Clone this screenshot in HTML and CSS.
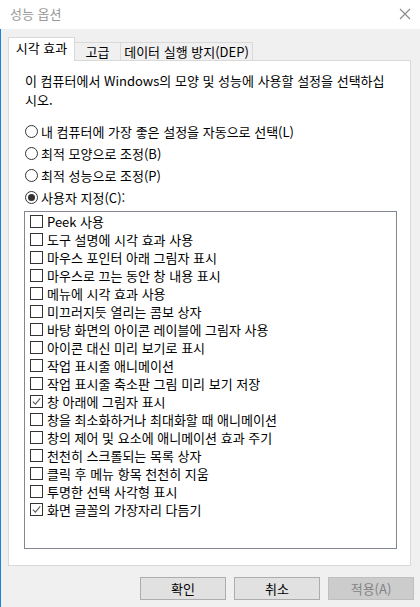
FILE: index.html
```html
<html lang="ko">
<head>
    <meta charset="UTF-8">
    <meta name="viewport" content="width=device-width, initial-scale=1.0">
    <title>성능 옵션</title>

    <link rel="stylesheet" href="styles.css">

</head>
<body>

    <header class="titlebar">
        <span class="title">성능 옵션</span>
        <svg class="close" width="12" height="12" viewBox="0 0 12 12">
            <path d="M1 1 L11 11 M11 1 L1 11" stroke="#8a8a8a" stroke-width="1.1" fill="none"/>
        </svg>
    </header>

    <main class="window">
        <div class="tabs">
            <div class="tab selected">시각 효과</div>
            <div class="tab">고급</div>
            <div class="tab">데이터 실행 방지(DEP)</div>
        </div>

        <div class="panel">
            <p class="intro">이 컴퓨터에서 Windows의 모양 및 성능에 사용할 설정을 선택하십<br>시오.</p>

            <div class="radios">
                <label class="radio"><span class="dot"></span>내 컴퓨터에 가장 좋은 설정을 자동으로 선택(L)</label>
                <label class="radio"><span class="dot"></span>최적 모양으로 조정(B)</label>
                <label class="radio"><span class="dot"></span>최적 성능으로 조정(P)</label>
                <label class="radio on"><span class="dot"></span>사용자 지정(C):</label>
            </div>

            <div class="list" id="list"></div>
        </div>

        <div class="buttons">
            <button class="btn">확인</button>
            <button class="btn">취소</button>
            <button class="btn disabled">적용(A)</button>
        </div>
    </main>

    <script>
        let items = [
            ["Peek 사용", false],
            ["도구 설명에 시각 효과 사용", false],
            ["마우스 포인터 아래 그림자 표시", false],
            ["마우스로 끄는 동안 창 내용 표시", false],
            ["메뉴에 시각 효과 사용", false],
            ["미끄러지듯 열리는 콤보 상자", false],
            ["바탕 화면의 아이콘 레이블에 그림자 사용", false],
            ["아이콘 대신 미리 보기로 표시", false],
            ["작업 표시줄 애니메이션", false],
            ["작업 표시줄 축소판 그림 미리 보기 저장", false],
            ["창 아래에 그림자 표시", true],
            ["창을 최소화하거나 최대화할 때 애니메이션", false],
            ["창의 제어 및 요소에 애니메이션 효과 주기", false],
            ["천천히 스크롤되는 목록 상자", false],
            ["클릭 후 메뉴 항목 천천히 지움", false],
            ["투명한 선택 사각형 표시", false],
            ["화면 글꼴의 가장자리 다듬기", true]
        ];

        let tick = '<path d="M2.8 6.6 L5.4 9.2 L10.2 3.4" stroke="#5a5a5a" stroke-width="1.1" fill="none"/>';

        let html = "";
        for (let item of items){
            html += `<div class="row">
                <svg class="box" width="13" height="13" viewBox="0 0 13 13">
                    <rect x="0.5" y="0.5" width="12" height="12" fill="#fff" stroke="#333"/>
                    ${item[1] ? tick : ""}
                </svg>
                <span>${item[0]}</span>
            </div>`;
        }
        document.getElementById("list").innerHTML = html;
    </script>

</body>
</html>
```

FILE: styles.css
```css
*{
    margin:0;
    padding:0;
    box-sizing:border-box;
}

body{
    font-family:"Noto Sans CJK KR", "Noto Sans", sans-serif;
    font-size:13px;
    color:#000;
    background-color:#f0f0f0;
    width:420px;
    height:607px;
    overflow:hidden;
}

.titlebar{
    height:29px;
    background-color:#fff;
    display:flex;
    align-items:center;
    justify-content:space-between;
    padding:0 9px 2px 10px;
}

.title{
    color:#999;
}

.window{
    height:578px;
    border-left:1px solid #1883d7;
    padding-top:8px;
}

.tabs{
    display:flex;
    align-items:flex-end;
    margin-left:7px;
    height:23px;
    position:relative;
    z-index:1;
}

.tab{
    height:18px;
    line-height:17px;
    text-align:center;
    border:1px solid #d9d9d9;
    border-bottom:none;
    border-left:none;
    background-color:#f0f0f0;
}

.tab:nth-child(2){
    width:46px;
}

.tab:nth-child(3){
    width:132px;
}

.tab.selected{
    width:67px;
    height:24px;
    line-height:19px;
    border-left:1px solid #d9d9d9;
    background-color:#fff;
    margin-bottom:-1px;
}

.panel{
    margin-left:7px;
    width:403px;
    height:506px;
    background-color:#fff;
    border:1px solid #d9d9d9;
    padding:10px 0 0 16px;
}

.intro{
    line-height:19px;
}

.radios{
    margin-top:11px;
}

.radio{
    display:flex;
    align-items:center;
    height:22px;
}

.dot{
    width:13px;
    height:13px;
    border:1px solid #333;
    border-radius:50%;
    margin-right:3px;
    display:flex;
    align-items:center;
    justify-content:center;
}

.radio.on .dot::after{
    content:"";
    width:7px;
    height:7px;
    border-radius:50%;
    background-color:#333;
}

.list{
    margin:3px 0 0 -1px;
    width:373px;
    height:338px;
    border:1px solid #828790;
    padding:0 5px;
}

.row{
    display:flex;
    align-items:center;
    height:18px;
}

.box{
    margin-right:4px;
    flex-shrink:0;
}

.buttons{
    display:flex;
    justify-content:flex-end;
    gap:8px;
    margin-top:11px;
    padding-right:6px;
}

.btn{
    width:86px;
    height:23px;
    font-family:inherit;
    font-size:13px;
    color:#000;
    background-color:#e1e1e1;
    border:1px solid #adadad;
}

.btn.disabled{
    color:#838383;
    background-color:#ccc;
    border-color:#bfbfbf;
}
```
